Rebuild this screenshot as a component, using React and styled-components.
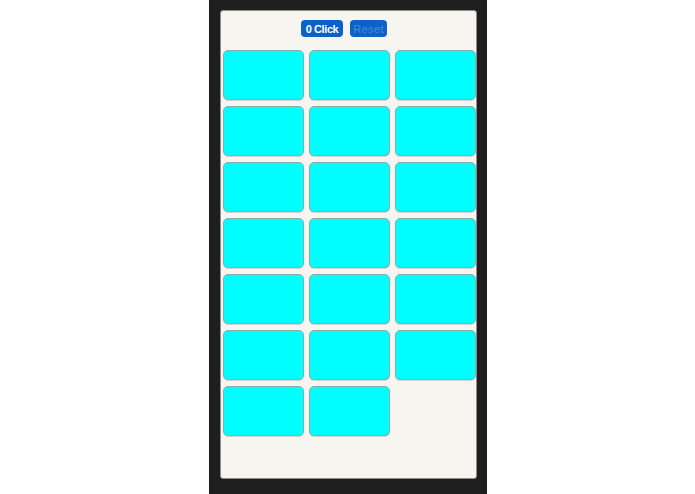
import styled, { createGlobalStyle } from "styled-components";

const GlobalStyle = createGlobalStyle`
  html, body {
    margin: 0;
    padding: 0;
    background: #ffffff;
    font-family: "Liberation Sans", Arial, sans-serif;
  }
`;

const Page = styled.div`
  display: flex;
  justify-content: center;
  height: 494px;
`;

const Frame = styled.div`
  width: 278px;
  height: 494px;
  box-sizing: border-box;
  background: #1e1e1e;
  padding: 10px 10px 15px 11px;
  display: flex;
`;

const Panel = styled.div`
  flex: 1;
  background: #f7f5f0;
  border: 1px solid #8c8c8c;
  border-radius: 3px;
  box-sizing: border-box;
  padding: 9px 0 0 2px;
  display: flex;
  flex-direction: column;
  align-items: flex-start;
`;

const Toolbar = styled.div`
  align-self: stretch;
  display: flex;
  justify-content: center;
  gap: 7px;
  padding-right: 10px;
  margin-bottom: 13px;
`;

const Button = styled.button`
  height: 17px;
  width: ${({ $w }) => $w}px;
  padding: 0;
  border: none;
  border-radius: 4px;
  background: #0d62c9;
  color: ${({ disabled }) => (disabled ? "#3f8ade" : "#ffffff")};
  font-family: "Liberation Sans", Arial, sans-serif;
  font-size: 11px;
  font-weight: ${({ disabled }) => (disabled ? "normal" : "bold")};
  letter-spacing: ${({ disabled }) => (disabled ? "0.4px" : "-0.4px")};
  cursor: pointer;
`;

const Grid = styled.div`
  display: grid;
  grid-template-columns: repeat(3, 81px);
  grid-auto-rows: 50px;
  column-gap: 5px;
  row-gap: 6px;
`;

const Tile = styled.div`
  background: #00ffff;
  border: 1px solid #86aeae;
  border-radius: 5px;
  box-shadow: 0 1px 1px rgba(0, 0, 0, 0.15);
`;

const tiles = Array.from({ length: 20 }, (_, i) => i);

export default function App() {
  return (
    <Page>
      <GlobalStyle />
      <Frame>
        <Panel>
          <Toolbar>
            <Button $w={42}>0 Click</Button>
            <Button $w={37} disabled>
              Reset
            </Button>
          </Toolbar>
          <Grid>
            {tiles.map((t) => (
              <Tile key={t} />
            ))}
          </Grid>
        </Panel>
      </Frame>
    </Page>
  );
}
